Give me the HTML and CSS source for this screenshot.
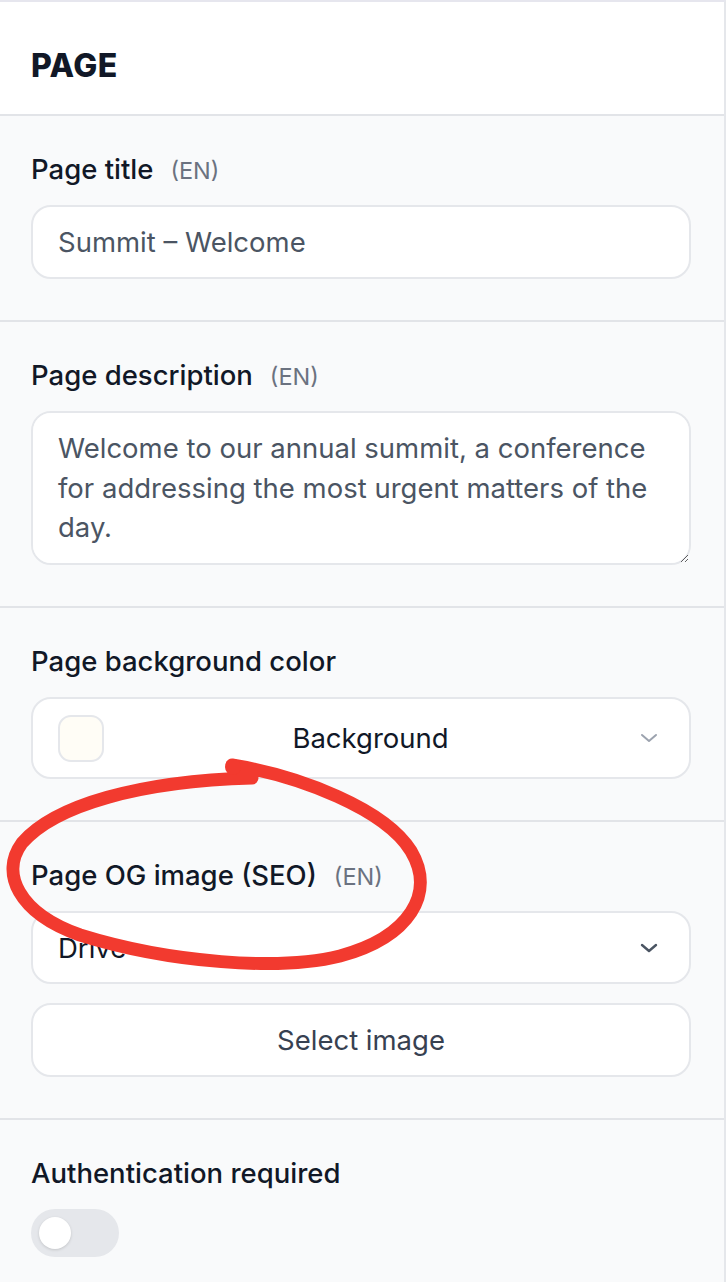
FILE: index.html
```html
<!DOCTYPE html>
<html>
    <head>
        <title>Page settings</title>
        <link rel="stylesheet" href="styles.css">
    </head>
    <body>
        <div class="panel">
            <div class="panel-head">
                <h1 class="panel-title">PAGE</h1>
            </div>

            <!--TITLE-->
            <div class="section">
                <div class="label">Page title <span class="lang">(EN)</span></div>
                <input class="field" type="text" value="Summit – Welcome">
            </div>

            <!--DESCRIPTION-->
            <div class="section">
                <div class="label">Page description <span class="lang">(EN)</span></div>
                <textarea class="field area">Welcome to our annual summit, a conference for addressing the most urgent matters of the day.</textarea>
            </div>

            <!--BACKGROUND-->
            <div class="section">
                <div class="label">Page background color</div>
                <div class="select color-select">
                    <span class="swatch"></span>
                    <span class="select-text center">Background</span>
                    <svg class="chevron" width="24" height="24" viewBox="0 0 24 24" fill="none" stroke="currentColor" stroke-width="2" stroke-linecap="round" stroke-linejoin="round"><path d="M5 9l7 6 7-6"/></svg>
                </div>
            </div>

            <!--OG IMAGE-->
            <div class="section og">
                <div class="label">Page OG image (SEO) <span class="lang">(EN)</span></div>
                <div class="select">
                    <span class="select-text">Drive</span>
                    <svg class="chevron dark" width="24" height="24" viewBox="0 0 24 24" fill="none" stroke="currentColor" stroke-width="2.4" stroke-linecap="round" stroke-linejoin="round"><path d="M5 9l7 6 7-6"/></svg>
                </div>
                <button class="btn">Select image</button>
                <svg class="scribble" width="460" height="230" viewBox="0 740 460 230">
                    <path d="M232,764 C300,775 385,808 411,850 C436,892 410,936 340,955 C280,970 170,962 80,934 C18,912 0,872 22,842 C55,804 140,780 252,777" fill="none" stroke="#f23a2f" stroke-width="13" stroke-linecap="round"/>
                    <circle cx="233" cy="766" r="8" fill="#f23a2f"/>
                </svg>
            </div>

            <!--AUTH-->
            <div class="section last">
                <div class="label">Authentication required</div>
                <div class="toggle"><span class="knob"></span></div>
            </div>
        </div>
    </body>
</html>
```

FILE: styles.css
```css
body{
    margin: 0;
    background-color: #f9fafb;
    font-family: Inter, "Noto Sans", sans-serif;
    color: #111827;
}

.panel{
    width: 724px;
    border-top: 2px #e6e6ee solid;
    border-right: 2px #e5e7eb solid;
    background-color: #f9fafb;
    min-height: 1280px;
}

.panel-head{
    height: 112px;
    background-color: white;
    border-bottom: 2px #e2e4e8 solid;
    display: flex;
    align-items: center;
    padding: 0 31px;
}

.panel-title{
    margin: 0;
    font-size: 32px;
    font-weight: 800;
    letter-spacing: 0.5px;
    padding-top: 14px;
}

.section{
    padding: 36px 33px 41px 31px;
    border-bottom: 2px #e2e4e8 solid;
    display: flex;
    flex-direction: column;
    gap: 19px;
}

.section.og{
    position: relative;
}

.section.last{
    border-bottom: none;
}

.label{
    display: flex;
    align-items: baseline;
    gap: 17px;
    height: 34px;
    font-size: 27.5px;
    font-weight: 500;
    line-height: 34px;
}

.lang{
    color: #6b7280;
    font-size: 23.5px;
    font-weight: 400;
}

.field{
    box-sizing: border-box;
    width: 100%;
    height: 74px;
    border: 2px #e5e7eb solid;
    border-radius: 20px;
    background-color: white;
    font-family: Inter, "Noto Sans", sans-serif;
    font-size: 27.5px;
    color: #4b5563;
    padding: 0 25px;
    outline: none;
    margin: 0;
    flex-shrink: 0;
}

.area{
    height: 154px;
    padding: 16px 25px;
    line-height: 39.5px;
    resize: vertical;
    display: block;
}

.select{
    box-sizing: border-box;
    height: 73px;
    border: 2px #e5e7eb solid;
    border-radius: 20px;
    background-color: white;
    display: flex;
    align-items: center;
    padding: 0 28px 0 25px;
    font-size: 27.5px;
}

.color-select{
    height: 82px;
}

.swatch{
    width: 46px;
    height: 47px;
    box-sizing: border-box;
    border: 2px #e5e7eb solid;
    border-radius: 13px;
    background-color: #fffdf6;
}

.select-text{
    flex: 1;
    color: #111827;
}

.select-text.center{
    text-align: center;
}

.chevron{
    color: #9ca3af;
}

.chevron.dark{
    color: #4b5563;
}

.btn{
    height: 74px;
    margin: 0;
    border: 2px #e5e7eb solid;
    border-radius: 20px;
    background-color: white;
    font-family: Inter, "Noto Sans", sans-serif;
    font-size: 27.5px;
    color: #374151;
}

.scribble{
    position: absolute;
    left: 0;
    top: -81px;
    pointer-events: none;
}

.toggle{
    width: 88px;
    height: 48px;
    border-radius: 24px;
    background-color: #e5e7eb;
    display: flex;
    align-items: center;
    padding-left: 8px;
    box-sizing: border-box;
}

.knob{
    width: 32px;
    height: 32px;
    border-radius: 50%;
    background-color: white;
    box-shadow: 0 1px 3px rgba(0,0,0,0.15);
}
```
